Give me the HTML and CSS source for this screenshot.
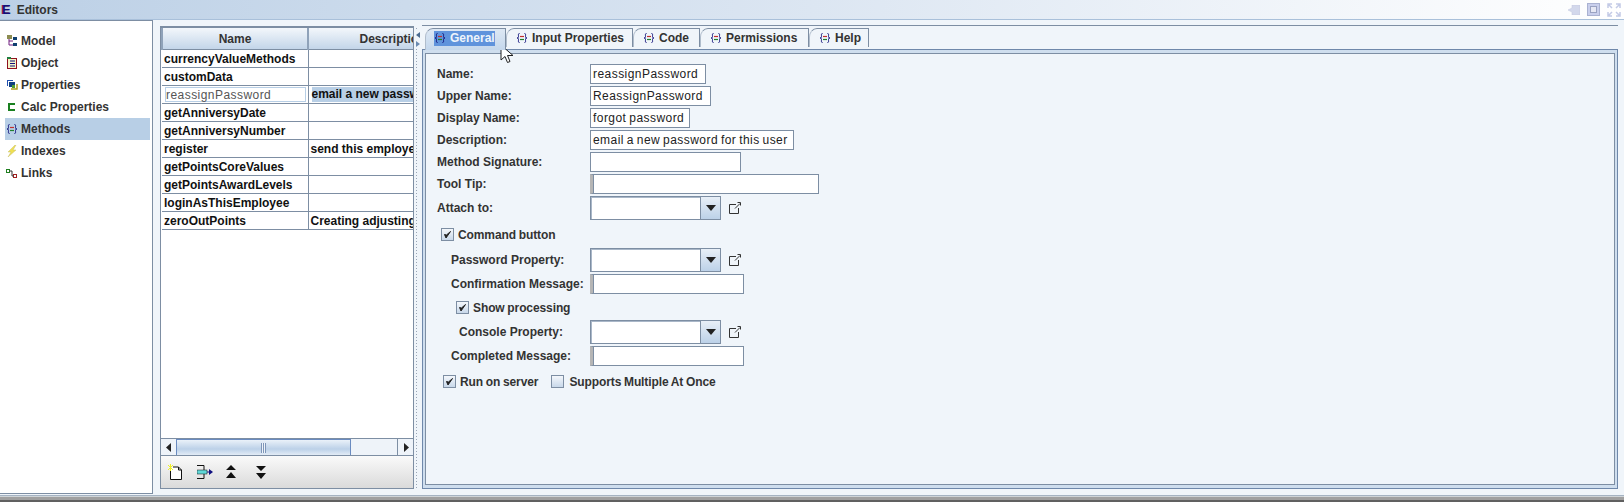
FILE: index.html
```html
<!DOCTYPE html>
<html lang="en">
<head>
    <meta charset="UTF-8">
    <title>Editors</title>
    <link rel="stylesheet" href="styles.css">
</head>
<body>
    <svg class="defs" width="0" height="0">
        <symbol id="i-method" viewBox="0 0 12 12">
            <path d="M3.500 1.500C2 1.500 2.500 3 2.500 4.500S2 5.500 1 6c1 .5 1.500 0 1.500 1.500S2 10.500 3.500 10.500M8.500 1.500C10 1.500 9.500 3 9.500 4.500S10 5.500 11 6c-1 .5-1.500 0-1.500 1.500S10 10.500 8.500 10.500" fill="none" stroke="#10107a" stroke-width="1"/>
            <path d="M4 4.500h4" stroke="#c03030" stroke-width="1.200"/>
            <path d="M4 7.500h4" stroke="#208030" stroke-width="1.200"/>
        </symbol>
        <symbol id="i-open" viewBox="0 0 14 14">
            <path d="M8 3.500H1.500v9h9V7" fill="none" stroke="#333" stroke-width="1"/>
            <path d="M7 7.500l5-5M9.500 1.500h3v3" fill="none" stroke="#333" stroke-width="1"/>
        </symbol>
        <symbol id="i-caret" viewBox="0 0 12 8">
            <path d="M1 1h10L6 7z" fill="#222"/>
        </symbol>
        <symbol id="i-check" viewBox="0 0 13 13">
            <path d="M3.500 6.500l1.500 3.500L9.500 3.500 5.500 7z" fill="#222" stroke="#222" stroke-width="1"/>
        </symbol>
    </svg>

    <div class="titlebar">
        <span class="app-logo">E</span>
        <span class="title">Editors</span>
        <div class="win-icons">
            <svg width="12" height="10" viewBox="0 0 12 10"><path d="M0 5l4-2V0h8v10H4V7z" fill="#d3d8ec" stroke="#c0c7de" stroke-width="0.500"/></svg>
            <svg width="13" height="13" viewBox="0 0 13 13"><rect x="0.500" y="0.500" width="12" height="12" fill="#c9cfec" stroke="#aab2d2"/><rect x="3.500" y="3.500" width="6" height="6" fill="#e6e8f4" stroke="#9aa2c2"/></svg>
            <svg width="14" height="14" viewBox="0 0 14 14"><path d="M1 5V1h4M13 5V1H9M1 9v4h4M13 9v4H9M1 1l4 4M13 1L9 5M1 13l4-4M13 13L9 9" fill="none" stroke="#c3cae6" stroke-width="1.500"/></svg>
        </div>
    </div>

    <div class="main">
        <ul class="nav">
            <li class="nav-item">
                <svg class="nav-icon" viewBox="0 0 12 12"><rect x="1" y="0" width="5" height="4" fill="#8c8c50"/><path d="M3 4v6h4M3 6h4" fill="none" stroke="#702080"/><rect x="7" y="2" width="4" height="3" fill="#104070"/><rect x="7" y="8" width="4" height="3" fill="#104070"/></svg>
                Model
            </li>
            <li class="nav-item">
                <svg class="nav-icon" viewBox="0 0 12 12"><rect x="1.500" y="1.500" width="9" height="10" fill="#f4f4c8" stroke="#901020"/><path d="M4 4h5M4 6.500h5M4 9h5" stroke="#101080"/><path d="M1 0h4v2H1z" fill="#208040"/></svg>
                Object
            </li>
            <li class="nav-item">
                <svg class="nav-icon" viewBox="0 0 12 12"><path d="M1 1h6v1H2v5H1z" fill="#2050b0"/><rect x="3" y="3" width="6" height="5" fill="#104080"/><path d="M5 10h6V5" fill="none" stroke="#b0a020" stroke-width="1.500"/><rect x="6" y="6" width="3" height="3" fill="#50a030"/></svg>
                Properties
            </li>
            <li class="nav-item">
                <svg class="nav-icon" viewBox="0 0 12 12"><path d="M9 3H3v6h6" fill="none" stroke="#1a8020" stroke-width="2"/></svg>
                Calc Properties
            </li>
            <li class="nav-item selected">
                <svg class="nav-icon"><use href="#i-method"/></svg>
                Methods
            </li>
            <li class="nav-item">
                <svg class="nav-icon" viewBox="0 0 12 12"><path d="M9 0L2 7h3l-3 5 8-7H7l3-5z" fill="#f0e050" stroke="#c8c070" stroke-width="0.500"/></svg>
                Indexes
            </li>
            <li class="nav-item">
                <svg class="nav-icon" viewBox="0 0 12 12"><rect x="0.500" y="2.500" width="3" height="3" fill="#fff" stroke="#208020"/><rect x="7.500" y="7.500" width="3" height="3" fill="#fff" stroke="#a02020"/><path d="M3.500 4H6v5h1.500" fill="none" stroke="#303030"/></svg>
                Links
            </li>
        </ul>

        <div class="list-panel">
            <div class="table-wrap">
                <table class="methods">
                    <thead>
                        <tr><th class="col-name">Name</th><th class="col-desc">Description</th></tr>
                    </thead>
                    <tbody>
                        <tr><td>currencyValueMethods</td><td></td></tr>
                        <tr><td>customData</td><td></td></tr>
                        <tr class="row-edit"><td><span class="cell-input">reassignPassword</span></td><td><span class="cell-sel">email a new password</span></td></tr>
                        <tr><td>getAnniversyDate</td><td></td></tr>
                        <tr><td>getAnniversyNumber</td><td></td></tr>
                        <tr><td>register</td><td>send this employee</td></tr>
                        <tr><td>getPointsCoreValues</td><td></td></tr>
                        <tr><td>getPointsAwardLevels</td><td></td></tr>
                        <tr><td>loginAsThisEmployee</td><td></td></tr>
                        <tr><td>zeroOutPoints</td><td>Creating adjusting entries</td></tr>
                    </tbody>
                </table>
            </div>
            <div class="hscroll">
                <div class="sb-btn"><svg width="6" height="9" viewBox="0 0 6 9"><path d="M5 0v9L0 4.500z" fill="#222"/></svg></div>
                <div class="sb-thumb"><span class="grip"></span></div>
                <div class="sb-track"></div>
                <div class="sb-btn right"><svg width="6" height="9" viewBox="0 0 6 9"><path d="M1 0v9l5-4.500z" fill="#222"/></svg></div>
            </div>
            <div class="list-tools">
                <svg class="tool-new" width="14" height="16" viewBox="0 0 14 16"><path d="M2.500 5v10.500h11V6l-3-3H5" fill="#fff" stroke="#111"/><path d="M10.500 3v3h3" fill="none" stroke="#111"/><path d="M0 1l5 5M5 1L0 6M2.500 0v7" stroke="#f0f020"/></svg>
                <svg class="tool-move" width="16" height="14" viewBox="0 0 16 14"><path d="M0 .5h7v13H0" fill="none" stroke="#111"/><rect x="0" y="5" width="10" height="4" fill="#60d8d8" stroke="#111" stroke-width="0.500"/><path d="M10 7h2" stroke="#101080"/><path d="M12 4l4 3-4 3z" fill="#101080"/></svg>
                <svg class="tool-up" width="12" height="14" viewBox="0 0 12 14"><path d="M6 0l5 5H1zM6 7l5 6H1z" fill="#111"/></svg>
                <svg class="tool-down" width="12" height="14" viewBox="0 0 12 14"><path d="M1 1h10L6 6zM1 8h10l-5 6z" fill="#111"/></svg>
            </div>
        </div>

        <div class="splitter">
            <svg width="6" height="18" viewBox="0 0 6 18"><path d="M5 1v6L1 4z" fill="#4a6a90"/><path d="M1 10v6l4-3z" fill="#6a8ab0"/></svg>
        </div>

        <div class="editor">
            <div class="tabs">
                <div class="tab active"><span class="tab-sel"><svg class="tab-icon"><use href="#i-method"/></svg>General</span></div>
                <div class="tab tab-input"><svg class="tab-icon"><use href="#i-method"/></svg>Input Properties</div>
                <div class="tab tab-code"><svg class="tab-icon"><use href="#i-method"/></svg>Code</div>
                <div class="tab tab-perm"><svg class="tab-icon"><use href="#i-method"/></svg>Permissions</div>
                <div class="tab tab-help"><svg class="tab-icon"><use href="#i-method"/></svg>Help</div>
            </div>
            <div class="tab-body">
                <div class="tab-inner">
                    <div class="row h22"><label>Name:</label><span class="field w116">reassignPassword</span></div>
                    <div class="row h22"><label>Upper Name:</label><span class="field w121">ReassignPassword</span></div>
                    <div class="row h22"><label>Display Name:</label><span class="field w100">forgot password</span></div>
                    <div class="row h22"><label>Description:</label><span class="field w204">email a new password for this user</span></div>
                    <div class="row h22"><label>Method Signature:</label><span class="field w151"></span></div>
                    <div class="row h22"><label>Tool Tip:</label><span class="field w229 handle"></span></div>
                    <div class="row h26"><label>Attach to:</label>
                        <span class="combo"><span class="combo-text"></span><span class="combo-btn"><svg width="12" height="8"><use href="#i-caret"/></svg></span></span>
                        <svg class="open-icon"><use href="#i-open"/></svg>
                    </div>
                    <div class="row check-row ind-1 mt-3"><span class="check"><svg width="13" height="13"><use href="#i-check"/></svg></span>Command button</div>
                    <div class="row h24 ind-2 mt-3"><label>Password Property:</label>
                        <span class="combo"><span class="combo-text"></span><span class="combo-btn"><svg width="12" height="8"><use href="#i-caret"/></svg></span></span>
                        <svg class="open-icon"><use href="#i-open"/></svg>
                    </div>
                    <div class="row h22 ind-2 mt-1"><label>Confirmation Message:</label><span class="field w154 handle"></span></div>
                    <div class="row check-row ind-3 mt-2"><span class="check"><svg width="13" height="13"><use href="#i-check"/></svg></span>Show processing</div>
                    <div class="row h24 ind-4 mt-2"><label>Console Property:</label>
                        <span class="combo"><span class="combo-text"></span><span class="combo-btn"><svg width="12" height="8"><use href="#i-caret"/></svg></span></span>
                        <svg class="open-icon"><use href="#i-open"/></svg>
                    </div>
                    <div class="row h22 ind-2 mt-1"><label>Completed Message:</label><span class="field w154 handle"></span></div>
                    <div class="row check-row ind-5 mt-4">
                        <span class="check"><svg width="13" height="13"><use href="#i-check"/></svg></span><span class="check-text">Run on server</span>
                        <span class="check check-wide"></span>Supports Multiple At Once
                    </div>
                </div>
            </div>
        </div>
    </div>

    <div class="statusbar"></div>

    <svg class="cursor" width="14" height="20" viewBox="0 0 14 20"><path d="M1 1v15l4-3.500 2.500 6 2.500-1-2.500-6H13z" fill="#fff" stroke="#222"/></svg>
</body>
</html>
```

FILE: styles.css
```css
html, body {
    margin: 0;
    height: 100%;
    overflow: hidden;
}
body {
    display: flex;
    flex-direction: column;
    position: relative;
    background-color: #f0f5fa;
    font-family: "Liberation Sans", Arial, sans-serif;
    font-size: 12px;
    font-weight: bold;
    color: #333333;
}
.defs {
    position: absolute;
}
.titlebar {
    display: flex;
    align-items: center;
    flex: 0 0 20px;
    box-sizing: border-box;
    padding-left: 2px;
    background: linear-gradient(90deg, #bcd0e6, #dce6f2 50%, #ffffff);
    border-bottom: 1px solid #a9c0da;
}
.app-logo {
    margin-right: 6px;
    font-size: 13px;
    color: #10107a;
    text-shadow: -1px 0 #9a1020;
}
.title {
    font-size: 12px;
}
.win-icons {
    display: flex;
    align-items: center;
    gap: 7px;
    margin-left: auto;
    margin-right: 3px;
}
.main {
    display: flex;
    flex: 1;
    min-height: 0;
}

/* left nav */
.nav {
    flex: 0 0 153px;
    box-sizing: border-box;
    margin: 0 0 1px;
    padding: 9px 0 0 5px;
    list-style: none;
    background-color: #ffffff;
    border-top: 1px solid #7d8ea3;
    border-right: 1px solid #7d8ea3;
    border-bottom: 1px solid #7d8ea3;
}
.nav-item {
    display: flex;
    align-items: center;
    height: 22px;
    padding-left: 1px;
    margin-right: 2px;
}
.nav-item.selected {
    background-color: #b8cfe6;
}
.nav-icon {
    width: 12px;
    height: 12px;
    margin-right: 3px;
}

/* methods list */
.list-panel {
    display: flex;
    flex-direction: column;
    flex: 0 0 254px;
    width: 254px;
    min-width: 0;
    box-sizing: border-box;
    margin: 6px 0 6px 7px;
    border: 1px solid #7d8ea3;
    border-top-width: 2px;
    overflow: hidden;
}
.table-wrap {
    flex: 1;
    min-height: 0;
    overflow: hidden;
    background-color: #ffffff;
}
.methods {
    table-layout: fixed;
    width: 316px;
    border-collapse: collapse;
}
.col-name {
    width: 144px;
}
.methods th {
    height: 21px;
    padding: 0;
    text-align: center;
    background: linear-gradient(#f3f7fb, #c3d5e9);
    border-right: 1px solid #7d8ea3;
    border-left: 2px solid #8fa2b9;
    border-bottom: 1px solid #7d8ea3;
}
.methods td {
    height: 17px;
    padding: 0 0 0 2px;
    color: #111111;
    white-space: nowrap;
    overflow: hidden;
    border-right: 1px solid #7d8ea3;
    border-bottom: 1px solid #7d8ea3;
}
.row-edit td {
    padding: 0 2px 0 3px;
}
.cell-input {
    display: block;
    height: 15px;
    line-height: 14px;
    box-sizing: border-box;
    font-weight: normal;
    color: #555555;
    border: 1px solid #b8cfe6;
    letter-spacing: 0.45px;
}
.cell-sel {
    display: block;
    height: 15px;
    line-height: 15px;
    background-color: #b8cfe6;
}
.hscroll {
    display: flex;
    flex: 0 0 16px;
    border-top: 1px solid #7d8ea3;
    border-bottom: 1px solid #7d8ea3;
}
.sb-btn {
    display: flex;
    align-items: center;
    justify-content: center;
    width: 15px;
    background-color: #eef3f9;
}
.sb-btn.right {
    border-left: 1px solid #7d8ea3;
}
.sb-thumb {
    display: flex;
    align-items: center;
    justify-content: center;
    box-sizing: border-box;
    width: 175px;
    background: linear-gradient(#eaf1f9, #bcd1e8 60%, #e3ecf6);
    border: 1px solid #6a8bc0;
    border-bottom: 0;
}
.grip {
    width: 5px;
    height: 10px;
    background: repeating-linear-gradient(90deg, #7d95b8 0 1px, #eef3f9 1px 2px);
}
.sb-track {
    flex: 1;
    background-color: #eef3f9;
}
.list-tools {
    display: flex;
    align-items: center;
    flex: 0 0 32px;
    padding-left: 7px;
    background: linear-gradient(#fafafa, #dadada);
}
.tool-move {
    margin-left: 15px;
}
.tool-up {
    margin-left: 12px;
}
.tool-down {
    margin-left: 18px;
}

/* splitter */
.splitter {
    flex: 0 0 7px;
    margin: 8px 1px 6px 0;
    background-image: linear-gradient(#9aa6b6 50%, transparent 50%);
    background-size: 1px 3px;
    background-repeat: repeat-y;
    background-position: 2px 0;
}
.splitter svg {
    display: block;
    margin-left: 1px;
    margin-top: 3px;
    background-color: #f0f5fa;
}

/* tabbed editor */
.editor {
    display: flex;
    flex-direction: column;
    flex: 1;
    min-width: 0;
    margin: 5px 6px 6px 0;
    border-top: 1px solid #7d8ea3;
}
.tabs {
    display: flex;
    flex: 0 0 21px;
    box-sizing: border-box;
    padding: 2px 0 0 3px;
}
.tab {
    display: flex;
    align-items: center;
    box-sizing: border-box;
    height: 19px;
    padding-left: 9px;
    white-space: nowrap;
    background-color: #f0f5fa;
    border: 1px solid #7d8ea3;
    border-bottom: 0;
    border-left-color: #b0bdcc;
    border-top-left-radius: 8px 9px;
}
.tab-input { width: 127px; }
.tab-code { width: 67px; }
.tab-perm { width: 109px; }
.tab-help { width: 60px; }
.tab.active {
    position: relative;
    z-index: 1;
    width: 81px;
    height: 22px;
    padding: 0 0 3px 8px;
    background: linear-gradient(#dde8f4, #c4d7ec);
}
.tab-sel {
    display: flex;
    align-items: center;
    width: 61px;
    height: 15px;
    color: #eef4fb;
    background-color: #5f93dc;
}
.tab-icon {
    flex: 0 0 12px;
    width: 12px;
    height: 12px;
    margin-right: 4px;
}
.tab-body {
    flex: 1;
    box-sizing: border-box;
    margin-top: -1px;
    padding: 3px 2px;
    background-color: #cfdeee;
    border: 1px solid #6f88aa;
}
.tab-inner {
    box-sizing: border-box;
    height: 100%;
    padding: 9px 0 0 11px;
    background-color: #f0f5fa;
    border: 1px solid #7d8ea3;
}

/* form rows */
.row {
    display: flex;
    align-items: center;
}
.h22 {
    height: 22px;
}
.h24 {
    height: 24px;
}
.h26 {
    height: 26px;
}
.mt-1 {
    margin-top: 1px;
}
.mt-2 {
    margin-top: 2px;
}
.mt-3 {
    margin-top: 3px;
}
.mt-4 {
    margin-top: 4px;
}
.row label {
    flex: 0 0 153px;
}
.ind-2 {
    padding-left: 14px;
}
.ind-2 label {
    flex-basis: 139px;
}
.ind-4 {
    padding-left: 22px;
}
.ind-4 label {
    flex-basis: 131px;
}
.field {
    box-sizing: border-box;
    height: 20px;
    line-height: 18px;
    padding-left: 2px;
    font-weight: normal;
    color: #222222;
    background-color: #ffffff;
    border: 1px solid #7d8ea3;
    letter-spacing: 0.45px;
    word-spacing: -0.9px;
    white-space: nowrap;
}
.w100 { width: 100px; }
.w116 { width: 116px; }
.w121 { width: 121px; }
.w151 { width: 151px; }
.w154 { width: 154px; }
.w204 { width: 204px; }
.w229 { width: 229px; }
.handle {
    border-left: 3px solid #b5b5b5;
    box-shadow: inset 1px 0 0 #7d8ea3;
}
.combo {
    display: flex;
    box-sizing: border-box;
    width: 131px;
    height: 24px;
    background-color: #ffffff;
    border: 1px solid #7d8ea3;
}
.combo-text {
    flex: 1;
    border: 1px solid #a9b7c8;
    border-width: 1px 0 0 1px;
}
.combo-btn {
    display: flex;
    align-items: center;
    justify-content: center;
    width: 19px;
    background: linear-gradient(#e8eff7, #bcd1e8);
    border-left: 1px solid #7d8ea3;
}
.open-icon {
    width: 14px;
    height: 14px;
    margin-left: 7px;
}
.check-row {
    height: 21px;
    letter-spacing: -0.1px;
    word-spacing: -0.5px;
}
.check {
    flex: 0 0 13px;
    box-sizing: border-box;
    width: 13px;
    height: 13px;
    margin-right: 4px;
    background: linear-gradient(#f4f7fb, #c8d8ea);
    border: 1px solid #7d8ea3;
}
.check svg {
    display: block;
    margin: -1px;
}
.check-wide {
    margin-right: 5px;
}
.check-text {
    margin-right: 13px;
}
.ind-1 {
    padding-left: 4px;
}
.ind-3 {
    padding-left: 19px;
}
.ind-5 {
    padding-left: 6px;
}

/* bottom bar */
.statusbar {
    flex: 0 0 7px;
    background: linear-gradient(#a5b3c2 0 1px, #cfd4d8 1px 2px, #a0a0a0 2px 5px, #606060 5px);
}

.cursor {
    position: absolute;
    left: 500px;
    top: 44px;
}
```
